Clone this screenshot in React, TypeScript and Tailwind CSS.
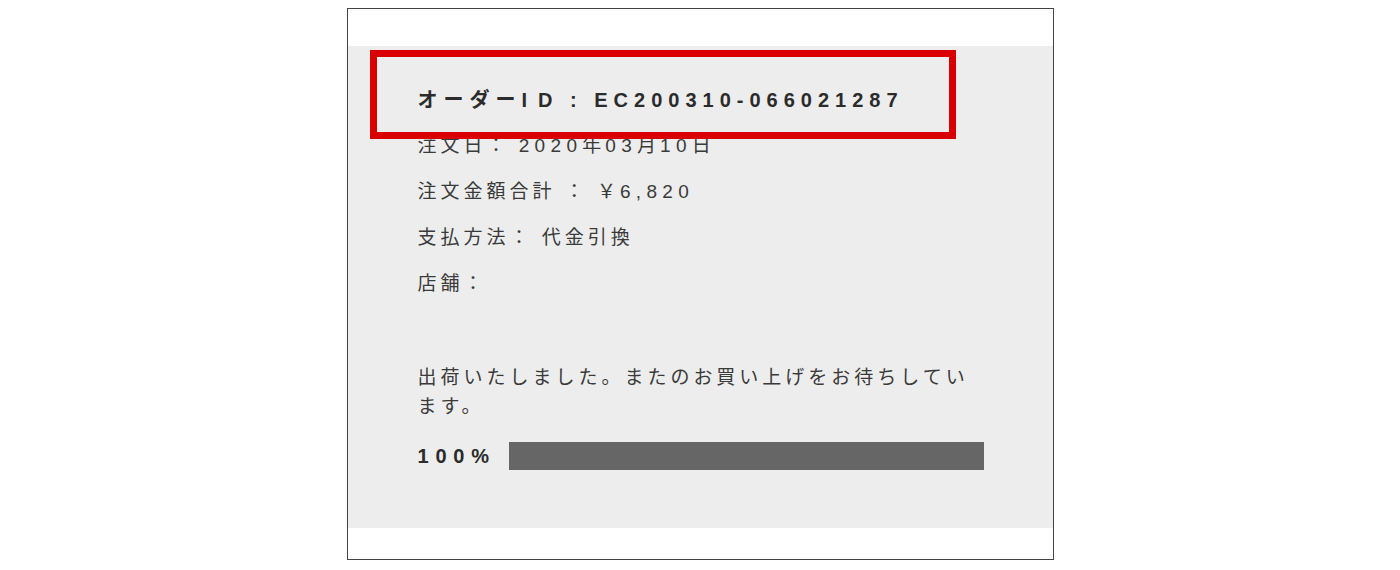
import React from "react";

const font = { fontFamily: '"Liberation Sans", "Noto Sans CJK JP", sans-serif' };

function Num({ children }: { children: React.ReactNode }) {
  return <span className="tracking-[0.28em]">{children}</span>;
}

export default function App() {
  return (
    <div className="w-[1400px] h-[570px] bg-white flex justify-center pt-[8px]" style={font}>
      <div className="w-[707px] h-[552px] border border-[#444] flex flex-col pt-[37px] pb-[31px] relative">
        <div className="flex-1 bg-[#ededed] pl-[70px] pr-[69px] pt-[31px] text-[#3a3a3a]">
          <div className="h-[46px] flex items-center text-[20px] font-bold tracking-[0.3em] text-[#2b2b2b] whitespace-pre">
            <span>オーダー</span>
            <span className="tracking-[0.55em]">I</span>
            <span>{"D : EC200310-066021287"}</span>
          </div>
          <div className="text-[19px] tracking-[0.21em] whitespace-pre">
            <div className="h-[46px] flex items-center">
              <span>{"注文日： "}</span>
              <Num>2020</Num>年<Num>03</Num>月<Num>10</Num>日
            </div>
            <div className="h-[46px] flex items-center">
              <span>{"注文金額合計 ： ￥"}</span>
              <Num>6,820</Num>
            </div>
            <div className="h-[46px] flex items-center">{"支払方法： 代金引換"}</div>
            <div className="h-[46px] flex items-center">{"店舗："}</div>
          </div>
          <p className="mt-[56px] text-[19px] leading-[29px] tracking-[0.21em]">
            出荷いたしました。またのお買い上げをお待ちしています。
          </p>
          <div className="mt-[20px] flex items-center gap-[20px]">
            <span className="w-[71px] text-[20px] font-bold tracking-[0.34em] text-[#2b2b2b] whitespace-nowrap">100%</span>
            <div className="h-[28px] flex-1 bg-[#666666]" />
          </div>
        </div>
        <div className="absolute left-[22px] top-[41px] w-[586px] h-[89px] border-[7px] border-[#d90000]" />
      </div>
    </div>
  );
}
